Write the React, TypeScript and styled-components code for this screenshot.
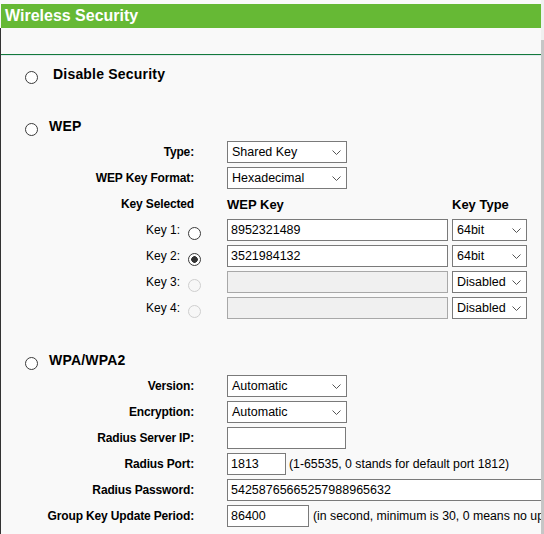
import React from "react";
import styled, { createGlobalStyle } from "styled-components";

const GlobalStyle = createGlobalStyle`
  html, body { margin: 0; padding: 0; background: #f9f9f9; }
  body { font-family: "Liberation Sans", Arial, sans-serif; color: #000; }
`;

const Page = styled.div`
  display: flex;
  width: 544px;
  height: 534px;
  overflow: hidden;
  background: #f9f9f9;
`;

const Main = styled.div`
  width: 541px;
  flex: none;
  overflow: hidden;
  display: flex;
  flex-direction: column;
`;

const ScrollTrack = styled.div`
  width: 3px;
  flex: none;
  display: flex;
  flex-direction: column;
  background: #f0f0f0;
`;

const ScrollThumb = styled.div`
  margin-top: 40px;
  flex: 1;
  background: #c6c6c6;
`;

const Header = styled.h1`
  margin: 4px 0 0 1px;
  height: 24px;
  padding-left: 4px;
  background: #66b935;
  color: #fff;
  font: bold 16px/24px "Liberation Sans", Arial, sans-serif;
`;

const Body = styled.div`
  flex: 1;
  border-left: 1px solid #333;
  padding-top: 26px;
`;

const Divider = styled.div`
  height: 1px;
  background: #147a3b;
  border-bottom: 1px solid #e1e9ef;
`;

const Form = styled.div`
  padding-top: 5px;
  display: flex;
  flex-direction: column;
`;

const SectionRow = styled.div`
  height: 26px;
  display: flex;
  align-items: center;
  padding-left: 24px;
`;

const SectionTitle = styled.span<{ $indent: number }>`
  margin-left: ${(p) => p.$indent}px;
  font-weight: bold;
  font-size: 14px;
  letter-spacing: 0.2px;
`;

const BlankRow = styled.div`
  height: 26px;
`;

const FieldRow = styled.div<{ $key?: boolean }>`
  height: 26px;
  display: grid;
  grid-template-columns: ${(p) => (p.$key ? "200px 1fr" : "193px 1fr")};
  column-gap: ${(p) => (p.$key ? "26px" : "33px")};
  align-items: center;
`;

const Label = styled.div`
  text-align: right;
  font-weight: bold;
  font-size: 12px;
  letter-spacing: -0.15px;
  white-space: nowrap;
`;

const KeyLabel = styled.div`
  display: flex;
  justify-content: flex-end;
  align-items: center;
  gap: 8px;
  font-size: 12px;
  white-space: nowrap;
`;

const Content = styled.div`
  display: flex;
  align-items: center;
  white-space: nowrap;
`;

const ColHead = styled.span<{ $w?: number }>`
  font-weight: bold;
  font-size: 13px;
  width: ${(p) => (p.$w ? `${p.$w}px` : "auto")};
`;

const Radio = styled.span<{ $checked?: boolean; $disabled?: boolean }>`
  display: inline-block;
  flex: none;
  width: 13px;
  height: 13px;
  margin-top: 6px;
  box-sizing: border-box;
  border-radius: 50%;
  border: 1px solid ${(p) => (p.$disabled ? "#cfcfcf" : "#3a3a3a")};
  background: ${(p) =>
    p.$checked
      ? "radial-gradient(circle, #333 0 3px, #fff 3.6px)"
      : p.$disabled
      ? "#f7f7f7"
      : "#fff"};
`;

const SelectBox = styled.div<{ $w: number }>`
  width: ${(p) => p.$w}px;
  height: 22px;
  box-sizing: border-box;
  border: 1px solid #7a7a7a;
  background: #fff;
  display: flex;
  align-items: center;
  justify-content: space-between;
  padding: 0 5px 0 4px;
  font-size: 12.5px;
  flex: none;
`;

const TextInput = styled.input<{ $w: number }>`
  width: ${(p) => p.$w}px;
  height: 22px;
  box-sizing: border-box;
  border: 1px solid ${(p) => (p.disabled ? "#a8a8a8" : "#7a7a7a")};
  background: ${(p) => (p.disabled ? "#f0f0f0" : "#fff")};
  padding: 0 3px;
  margin: 0;
  font: 12.5px "Liberation Sans", Arial, sans-serif;
  color: #000;
  flex: none;
  outline: none;
`;

const Hint = styled.span<{ $gap: number }>`
  margin-left: ${(p) => p.$gap}px;
  font-size: 12.3px;
`;

const Gap = styled.span<{ $w: number }>`
  width: ${(p) => p.$w}px;
  flex: none;
`;

const Chevron = () => (
  <svg width="9" height="5" viewBox="0 0 9 5" fill="none">
    <path d="M0.5 0.5 L4.5 4.5 L8.5 0.5" stroke="#555" strokeWidth="1" />
  </svg>
);

const Select = ({ w, value }: { w: number; value: string }) => (
  <SelectBox $w={w}>
    <span>{value}</span>
    <Chevron />
  </SelectBox>
);

const keys = [
  { n: 1, v: "8952321489", t: "64bit", checked: false, disabled: false },
  { n: 2, v: "3521984132", t: "64bit", checked: true, disabled: false },
  { n: 3, v: "", t: "Disabled", checked: false, disabled: true },
  { n: 4, v: "", t: "Disabled", checked: false, disabled: true },
];

export default function App() {
  return (
    <>
      <GlobalStyle />
      <Page>
        <Main>
          <Header>Wireless Security</Header>
          <Body>
            <Divider />
            <Form>
              <SectionRow>
                <Radio />
                <SectionTitle $indent={15}>Disable Security</SectionTitle>
              </SectionRow>
              <BlankRow />
              <SectionRow>
                <Radio />
                <SectionTitle $indent={11}>WEP</SectionTitle>
              </SectionRow>
              <FieldRow>
                <Label>Type:</Label>
                <Content>
                  <Select w={120} value="Shared Key" />
                </Content>
              </FieldRow>
              <FieldRow>
                <Label>WEP Key Format:</Label>
                <Content>
                  <Select w={120} value="Hexadecimal" />
                </Content>
              </FieldRow>
              <FieldRow>
                <Label>Key Selected</Label>
                <Content>
                  <ColHead $w={225}>WEP Key</ColHead>
                  <ColHead>Key Type</ColHead>
                </Content>
              </FieldRow>
              {keys.map((k) => (
                <FieldRow $key key={k.n}>
                  <KeyLabel>
                    <span>Key {k.n}:</span>
                    <Radio $checked={k.checked} $disabled={k.disabled} />
                  </KeyLabel>
                  <Content>
                    <TextInput
                      $w={221}
                      defaultValue={k.v}
                      disabled={k.disabled}
                      readOnly
                    />
                    <Gap $w={4} />
                    <Select w={75} value={k.t} />
                  </Content>
                </FieldRow>
              ))}
              <BlankRow />
              <SectionRow>
                <Radio />
                <SectionTitle $indent={11}>WPA/WPA2</SectionTitle>
              </SectionRow>
              <FieldRow>
                <Label>Version:</Label>
                <Content>
                  <Select w={120} value="Automatic" />
                </Content>
              </FieldRow>
              <FieldRow>
                <Label>Encryption:</Label>
                <Content>
                  <Select w={120} value="Automatic" />
                </Content>
              </FieldRow>
              <FieldRow>
                <Label>Radius Server IP:</Label>
                <Content>
                  <TextInput $w={119} defaultValue="" readOnly />
                </Content>
              </FieldRow>
              <FieldRow>
                <Label>Radius Port:</Label>
                <Content>
                  <TextInput $w={59} defaultValue="1813" readOnly />
                  <Hint $gap={3}>(1-65535, 0 stands for default port 1812)</Hint>
                </Content>
              </FieldRow>
              <FieldRow>
                <Label>Radius Password:</Label>
                <Content>
                  <TextInput
                    $w={340}
                    defaultValue="54258765665257988965632"
                    readOnly
                  />
                </Content>
              </FieldRow>
              <FieldRow>
                <Label>Group Key Update Period:</Label>
                <Content>
                  <TextInput $w={82} defaultValue="86400" readOnly />
                  <Hint $gap={4}>
                    (in second, minimum is 30, 0 means no update)
                  </Hint>
                </Content>
              </FieldRow>
            </Form>
          </Body>
        </Main>
        <ScrollTrack>
          <ScrollThumb />
        </ScrollTrack>
      </Page>
    </>
  );
}
